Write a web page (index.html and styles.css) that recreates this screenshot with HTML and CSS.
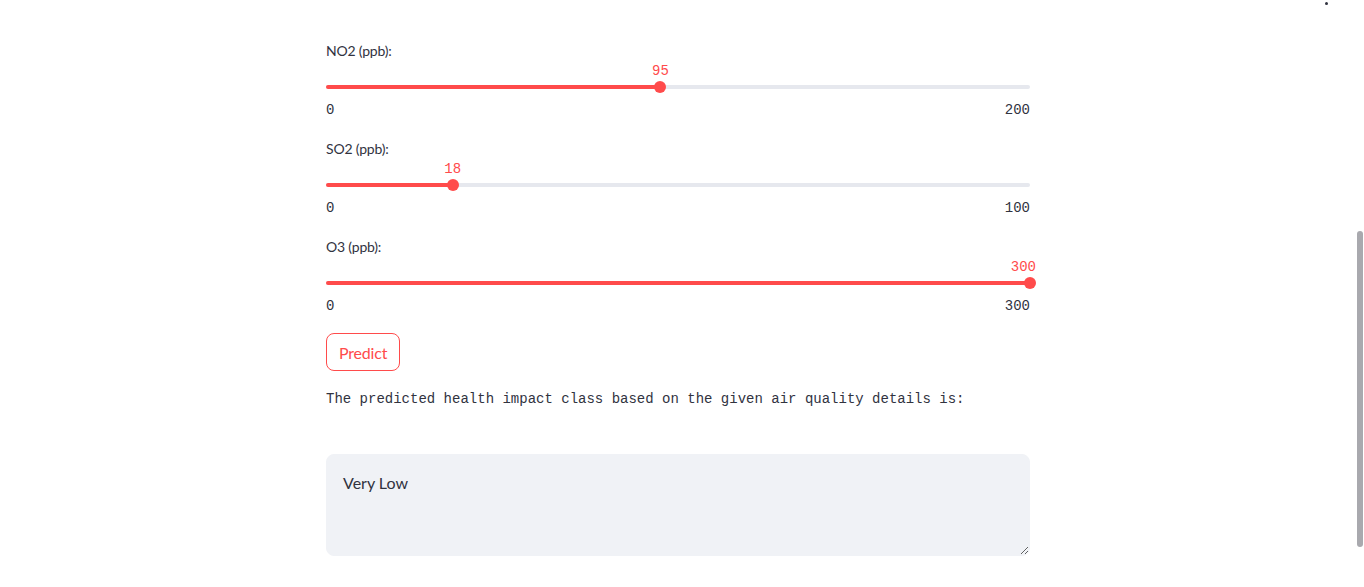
FILE: index.html
```html
<!DOCTYPE html>
<html lang="en">
<head>
<meta charset="utf-8">
<title>Air Quality Health Impact</title>
<link rel="stylesheet" href="styles.css">
</head>
<body>
<div class="app">
  <main class="block">
    <div class="slider-block">
      <label class="label">NO2 (ppb):</label>
      <div class="slider">
        <div class="track"><div class="fill" style="width:47.5%"></div></div>
        <div class="thumb" style="left:47.5%"></div>
        <div class="value" style="left:47.5%">95</div>
      </div>
      <div class="ticks"><span>0</span><span>200</span></div>
    </div>
    <div class="slider-block">
      <label class="label">SO2 (ppb):</label>
      <div class="slider">
        <div class="track"><div class="fill" style="width:18%"></div></div>
        <div class="thumb" style="left:18%"></div>
        <div class="value" style="left:18%">18</div>
      </div>
      <div class="ticks"><span>0</span><span>100</span></div>
    </div>
    <div class="slider-block">
      <label class="label">O3 (ppb):</label>
      <div class="slider">
        <div class="track"><div class="fill" style="width:100%"></div></div>
        <div class="thumb" style="left:100%"></div>
        <div class="value value-end" style="left:100%">300</div>
      </div>
      <div class="ticks"><span>0</span><span>300</span></div>
    </div>
    <button class="btn" type="button">Predict</button>
    <p class="mono-text">The predicted health impact class based on the given air quality details is:</p>
    <textarea class="result" readonly>Very Low</textarea>
  </main>
</div>
<div class="menu-dot"></div>
<div class="scrollbar"></div>
</body>
</html>
```
FILE: styles.css
```css
html, body {
  margin: 0;
  padding: 0;
  background: #ffffff;
  overflow: hidden;
  height: 100%;
}
body {
  font-family: "Lato", "Noto Sans", sans-serif;
  color: rgb(49, 51, 63);
}
.app {
  width: 1356px;
  display: flex;
  justify-content: center;
}
.block {
  width: 704px;
  padding-top: 41px;
  display: flex;
  flex-direction: column;
}
.slider-block {
  display: flex;
  flex-direction: column;
  margin-bottom: 19px;
}
.label {
  font-size: 14px;
  line-height: 20px;
  height: 20px;
  letter-spacing: -0.2px;
}
.slider {
  position: relative;
  height: 39px;
}
.track {
  position: absolute;
  left: 0;
  right: 0;
  top: 24px;
  height: 4px;
  border-radius: 2px;
  background: #e6e8ee;
}
.fill {
  height: 100%;
  background: #ff4b4b;
  border-radius: 2px;
}
.thumb {
  position: absolute;
  top: 20px;
  width: 12px;
  height: 12px;
  margin-left: -6px;
  border-radius: 50%;
  background: #ff4b4b;
}
.value {
  position: absolute;
  top: 0;
  line-height: 20px;
  font-family: "Liberation Mono", "DejaVu Sans Mono", monospace;
  font-size: 14px;
  color: #ff4b4b;
  transform: translateX(-50%);
  white-space: nowrap;
}
.value-end {
  transform: translateX(calc(-100% + 6px));
}
.ticks {
  display: flex;
  justify-content: space-between;
  font-family: "Liberation Mono", "DejaVu Sans Mono", monospace;
  font-size: 14px;
  line-height: 20px;
  color: rgb(49, 51, 63);
}
.btn {
  align-self: flex-start;
  margin-top: -2px;
  height: 38px;
  padding: 0 12px;
  border: 1px solid #ff4b4b;
  border-radius: 8px;
  background: #ffffff;
  color: #ff4b4b;
  font-family: "Lato", "Noto Sans", sans-serif;
  font-size: 16px;
  letter-spacing: -0.2px;
}
.mono-text {
  margin: 18px 0 0;
  font-family: "Liberation Mono", "DejaVu Sans Mono", monospace;
  font-size: 14px;
  line-height: 20px;
  color: rgb(49, 51, 63);
}
.result {
  margin-top: 45px;
  height: 102px;
  box-sizing: border-box;
  padding: 16px 16px;
  border: 1px solid #f0f2f6;
  border-radius: 8px;
  background: #f0f2f6;
  color: rgb(49, 51, 63);
  font-family: "Lato", "Noto Sans", sans-serif;
  font-size: 16px;
  line-height: 24px;
  outline: none;
}
.menu-dot {
  position: absolute;
  left: 1325px;
  top: 2px;
  width: 3px;
  height: 3px;
  border-radius: 50%;
  background: #31333f;
}
.scrollbar {
  position: absolute;
  left: 1357px;
  top: 231px;
  width: 6px;
  height: 316px;
  border-radius: 3px;
  background: #a9a9ae;
}
```
